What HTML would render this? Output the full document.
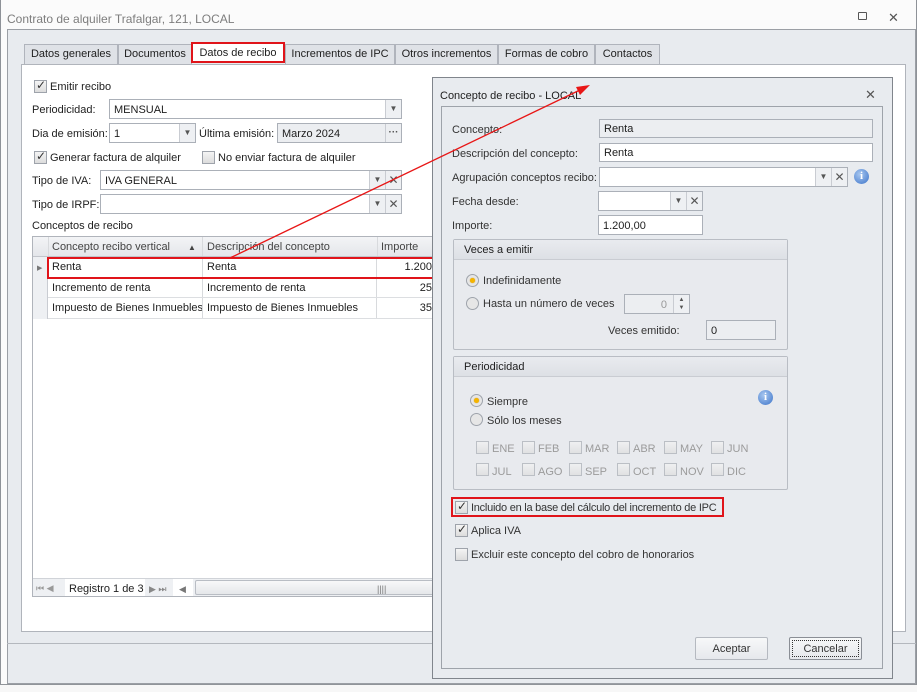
<!DOCTYPE html><html><head><meta charset="utf-8"><style>
*{box-sizing:border-box;margin:0;padding:0}
body{width:917px;height:692px;position:relative;overflow:hidden;background:#fbfbfb;font-family:"Liberation Sans","DejaVu Sans",sans-serif;font-size:11px;color:#1e1e1e}
.a{position:absolute}
.t{position:absolute;white-space:nowrap;line-height:14px;margin-top:1px}
.f{position:absolute;background:#fff;border:1px solid #abb0b8;height:20px;padding:3px 4px 0;line-height:14px;white-space:nowrap;overflow:hidden}
.g{background:#eceef1}
.btn{position:absolute;border-left:1px solid #c9ccd2;background:#eef0f3;top:0;bottom:0;width:16px;text-align:center;font-size:8px;color:#555;line-height:18px}
.cb{position:absolute;width:13px;height:13px;border:1px solid #9ea3ab;background:linear-gradient(#f4f4f4,#dcdcdc)}
.cb.on::after{content:"✓";position:absolute;left:1px;top:-3px;font-size:12px;font-weight:bold;color:#333}
.rd{position:absolute;width:13px;height:13px;border-radius:50%;border:1px solid #9ea3ab;background:#e6e6e6}
.rd.on::after{content:"";position:absolute;left:3px;top:3px;width:5px;height:5px;border-radius:50%;background:#f4b400;box-shadow:0 0 1px #c80}
.tab{position:absolute;top:44px;height:20px;background:#dfe2e7;border:1px solid #b0b4bc;border-bottom:none;text-align:center;line-height:19px;white-space:nowrap}
.dis{color:#9b9b9b}
.info{position:absolute;width:15px;height:15px;border-radius:50%;background:radial-gradient(circle at 40% 35%,#a9c8f0,#3b73c9);color:#fff;font:bold 11px "Liberation Serif",serif;text-align:center;line-height:15px}
.grp{position:absolute;border:1px solid #b9bdc4;border-radius:2px;background:#e8eaee}
.grp .h{height:20px;background:linear-gradient(#e9ebef,#dde0e5);border-bottom:1px solid #c9ccd2;padding-left:10px;line-height:20px}
.cell{position:absolute;border-right:1px solid #d8dadd;height:100%;padding-left:4px;line-height:21px;white-space:nowrap;overflow:hidden}
</style></head><body>
<div class="t" style="left:7px;top:11px;color:#7d7d7d;font-size:12px">Contrato de alquiler Trafalgar, 121, LOCAL</div>
<div class="a" style="left:858px;top:12px;width:9px;height:8px;border:1px solid #555;border-radius:1px"></div>
<div class="t" style="left:888px;top:10px;color:#555;font-size:13px">✕</div>
<div class="a" style="left:0;top:0;width:917px;height:692px;border:1px solid #8e9298;border-top:none"></div>
<div class="a g" style="left:7px;top:29px;width:909px;height:655px;border:1px solid #9b9fa5;background:#e8ebef"></div>
<div class="a" style="left:7px;top:643px;width:909px;height:1px;background:#b4b8be"></div>
<div class="a" style="left:0;top:684px;width:917px;height:8px;background:#f7f7f7;border-top:1px solid #909499"></div>
<div class="tab" style="left:24px;width:94px">Datos generales</div>
<div class="tab" style="left:118px;width:74px">Documentos</div>
<div class="tab" style="left:191px;width:94px;background:#fff;border:2px solid #e0141a;height:21px;top:42px;line-height:19px">Datos de recibo</div>
<div class="tab" style="left:285px;width:110px">Incrementos de IPC</div>
<div class="tab" style="left:395px;width:103px">Otros incrementos</div>
<div class="tab" style="left:498px;width:97px">Formas de cobro</div>
<div class="tab" style="left:595px;width:65px">Contactos</div>
<div class="a" style="left:21px;top:64px;width:885px;height:568px;background:#fff;border:1px solid #b0b4bb"></div>
<div class="cb on" style="left:34px;top:80px"></div><div class="t" style="left:50px;top:79px">Emitir recibo</div>
<div class="t" style="left:32px;top:102px">Periodicidad:</div>
<div class="f" style="left:109px;top:99px;width:293px">MENSUAL<div class="btn" style="right:0">▼</div></div>
<div class="t" style="left:32px;top:126px">Dia de emisión:</div>
<div class="f" style="left:109px;top:123px;width:87px">1<div class="btn" style="right:0">▼</div></div>
<div class="t" style="left:199px;top:126px">Última emisión:</div>
<div class="f g" style="left:277px;top:123px;width:125px">Marzo 2024<div class="btn" style="right:0;background:#eceef1;font-weight:bold;font-size:10px">···</div></div>
<div class="cb on" style="left:34px;top:151px"></div><div class="t" style="left:50px;top:150px">Generar factura de alquiler</div>
<div class="cb" style="left:202px;top:151px"></div><div class="t" style="left:218px;top:150px">No enviar factura de alquiler</div>
<div class="t" style="left:32px;top:173px">Tipo de IVA:</div>
<div class="f" style="left:100px;top:170px;width:302px">IVA GENERAL<div class="btn" style="right:16px">▼</div><div class="btn" style="right:0;font-size:12px;font-weight:bold">✕</div></div>
<div class="t" style="left:32px;top:197px">Tipo de IRPF:</div>
<div class="f" style="left:100px;top:194px;width:302px"><div class="btn" style="right:16px">▼</div><div class="btn" style="right:0;font-size:12px;font-weight:bold">✕</div></div>
<div class="t" style="left:32px;top:218px">Conceptos de recibo</div>
<div class="a" style="left:32px;top:236px;width:410px;height:361px;border:1px solid #b0b4bb;background:#fff"></div>
<div class="a" style="left:33px;top:237px;width:409px;height:20px;background:linear-gradient(#f3f4f6,#e4e6ea);border-bottom:1px solid #c2c5cb">
<div class="cell" style="left:0;width:16px"></div>
<div class="cell" style="left:15px;width:155px;color:#444">Concepto recibo vertical<span style="position:absolute;left:140px;font-size:8px">▲</span></div>
<div class="cell" style="left:170px;width:175px;color:#444">Descripción del concepto</div>
<div class="cell" style="left:344px;width:70px;color:#444">Importe</div></div>
<div class="a" style="left:33px;top:257px;width:409px;height:62px">
<div class="a" style="left:0;top:0;width:15px;height:62px;background:#eef0f3;border-right:1px solid #c9ccd2"></div>
<div class="t" style="left:4px;top:4px;font-size:7px;color:#777">▶</div>
<div class="a" style="left:15px;top:0;width:394px;height:62px">
<div class="a" style="top:0;left:0;width:394px;height:21px;border-bottom:1px solid #dcdee1"><div class="cell" style="left:0;width:155px">Renta</div><div class="cell" style="left:155px;width:174px">Renta</div><div class="cell" style="left:329px;width:55px;text-align:right;border:none">1.200</div></div>
<div class="a" style="top:21px;left:0;width:394px;height:20px;border-bottom:1px solid #dcdee1"><div class="cell" style="left:0;width:155px">Incremento de renta</div><div class="cell" style="left:155px;width:174px">Incremento de renta</div><div class="cell" style="left:329px;width:55px;text-align:right;border:none">25</div></div>
<div class="a" style="top:41px;left:0;width:394px;height:21px;border-bottom:1px solid #dcdee1"><div class="cell" style="left:0;width:155px">Impuesto de Bienes Inmuebles</div><div class="cell" style="left:155px;width:174px">Impuesto de Bienes Inmuebles</div><div class="cell" style="left:329px;width:55px;text-align:right;border:none">35</div></div>
</div></div>
<div class="a" style="left:47px;top:257px;width:387px;height:22px;border:2px solid #e0141a"></div>
<div class="a" style="left:33px;top:578px;width:409px;height:18px;background:#eef0f3;border-top:1px solid #d0d3d8">
<div class="t" style="left:3px;top:1px;font-size:9px;color:#999">⏮ ◀</div>
<div class="a" style="left:32px;top:0;width:80px;height:17px;background:#fff"></div>
<div class="t" style="left:36px;top:2px">Registro 1 de 3</div>
<div class="t" style="left:116px;top:2px;font-size:9px;color:#888">▶ ⏭</div>
<div class="a" style="left:140px;top:0;width:20px;height:17px;background:#fff"></div>
<div class="t" style="left:146px;top:2px;font-size:9px;color:#777">◀</div>
<div class="a" style="left:162px;top:1px;width:260px;height:15px;border:1px solid #b9bdc4;background:linear-gradient(#f8f8f9,#e5e7ea);border-radius:2px"></div>
<div class="t" style="left:344px;top:2px;font-size:9px;color:#777">||||</div></div>
<div class="a" style="left:432px;top:77px;width:461px;height:602px;background:#e8ebef;border:1px solid #80858c"></div>
<div class="t" style="left:440px;top:88px">Concepto de recibo - LOCAL</div>
<div class="t" style="left:865px;top:87px;color:#555;font-size:13px">✕</div>
<div class="a" style="left:441px;top:106px;width:442px;height:563px;border:1px solid #9ea3aa"></div>
<div class="t" style="left:452px;top:122px;color:#333">Concepto:</div>
<div class="f g" style="left:599px;top:119px;width:274px;height:19px;padding-top:2px">Renta</div>
<div class="t" style="left:452px;top:146px;color:#333">Descripción del concepto:</div>
<div class="f" style="left:599px;top:143px;width:274px;height:19px;padding-top:2px">Renta</div>
<div class="t" style="left:452px;top:170px;color:#333">Agrupación conceptos recibo:</div>
<div class="f" style="left:599px;top:167px;width:249px;height:20px"><div class="btn" style="right:16px">▼</div><div class="btn" style="right:0;font-size:12px;font-weight:bold">✕</div></div>
<div class="info" style="left:854px;top:169px">i</div>
<div class="t" style="left:452px;top:194px;color:#333">Fecha desde:</div>
<div class="f" style="left:598px;top:191px;width:105px"><div class="btn" style="right:16px">▼</div><div class="btn" style="right:0;font-size:12px;font-weight:bold">✕</div></div>
<div class="t" style="left:452px;top:218px;color:#333">Importe:</div>
<div class="f" style="left:598px;top:215px;width:105px">1.200,00</div>
<div class="grp" style="left:453px;top:239px;width:335px;height:111px"><div class="h">Veces a emitir</div></div>
<div class="rd on" style="left:466px;top:274px"></div><div class="t" style="left:483px;top:273px;color:#333">Indefinidamente</div>
<div class="rd" style="left:466px;top:297px"></div><div class="t" style="left:483px;top:296px;color:#333">Hasta un número de veces</div>
<div class="f g" style="left:624px;top:294px;width:66px;text-align:right;padding-right:22px;color:#999">0<div class="btn" style="right:0;font-size:6px;line-height:8px;padding-top:1px">▲<br>▼</div></div>
<div class="t" style="left:608px;top:323px;color:#333">Veces emitido:</div>
<div class="f g" style="left:706px;top:320px;width:70px">0</div>
<div class="grp" style="left:453px;top:356px;width:335px;height:134px"><div class="h">Periodicidad</div></div>
<div class="info" style="left:758px;top:390px">i</div>
<div class="rd on" style="left:470px;top:394px"></div><div class="t" style="left:487px;top:394px;color:#333">Siempre</div>
<div class="rd" style="left:470px;top:413px"></div><div class="t" style="left:487px;top:413px;color:#333">Sólo los meses</div>
<div class="cb" style="left:476px;top:441px;opacity:.6"></div><div class="t dis" style="left:492px;top:441px">ENE</div>
<div class="cb" style="left:522px;top:441px;opacity:.6"></div><div class="t dis" style="left:538px;top:441px">FEB</div>
<div class="cb" style="left:569px;top:441px;opacity:.6"></div><div class="t dis" style="left:585px;top:441px">MAR</div>
<div class="cb" style="left:617px;top:441px;opacity:.6"></div><div class="t dis" style="left:633px;top:441px">ABR</div>
<div class="cb" style="left:664px;top:441px;opacity:.6"></div><div class="t dis" style="left:680px;top:441px">MAY</div>
<div class="cb" style="left:711px;top:441px;opacity:.6"></div><div class="t dis" style="left:727px;top:441px">JUN</div>
<div class="cb" style="left:476px;top:463px;opacity:.6"></div><div class="t dis" style="left:492px;top:464px">JUL</div>
<div class="cb" style="left:522px;top:463px;opacity:.6"></div><div class="t dis" style="left:538px;top:464px">AGO</div>
<div class="cb" style="left:569px;top:463px;opacity:.6"></div><div class="t dis" style="left:585px;top:464px">SEP</div>
<div class="cb" style="left:617px;top:463px;opacity:.6"></div><div class="t dis" style="left:633px;top:464px">OCT</div>
<div class="cb" style="left:664px;top:463px;opacity:.6"></div><div class="t dis" style="left:680px;top:464px">NOV</div>
<div class="cb" style="left:711px;top:463px;opacity:.6"></div><div class="t dis" style="left:727px;top:464px">DIC</div>
<div class="a" style="left:451px;top:497px;width:273px;height:20px;border:2px solid #e0141a"></div>
<div class="cb on" style="left:455px;top:501px"></div><div class="t" style="left:471px;top:500px;color:#333;letter-spacing:-.25px">Incluido en la base del cálculo del incremento de IPC</div>
<div class="cb on" style="left:455px;top:524px"></div><div class="t" style="left:471px;top:523px;color:#333">Aplica IVA</div>
<div class="cb" style="left:455px;top:548px"></div><div class="t" style="left:471px;top:547px;color:#333">Excluir este concepto del cobro de honorarios</div>
<div class="a" style="left:695px;top:637px;width:73px;height:23px;border:1px solid #b5b9c0;border-radius:2px;background:linear-gradient(#f7f8f9,#e6e8ec);text-align:center;line-height:22px;color:#333">Aceptar</div>
<div class="a" style="left:789px;top:637px;width:73px;height:23px;border:1px solid #8a8e95;border-radius:2px;background:linear-gradient(#f7f8f9,#e6e8ec);text-align:center;line-height:22px;color:#333"><div style="position:absolute;inset:2px;border:1px dotted #333"></div>Cancelar</div>
<svg class="a" style="left:0;top:0" width="917" height="692"><line x1="230" y1="258" x2="582" y2="89" stroke="#e81616" stroke-width="1.3"/><polygon points="590,85 576,87 580,95" fill="#e81616"/></svg>
</body></html>
